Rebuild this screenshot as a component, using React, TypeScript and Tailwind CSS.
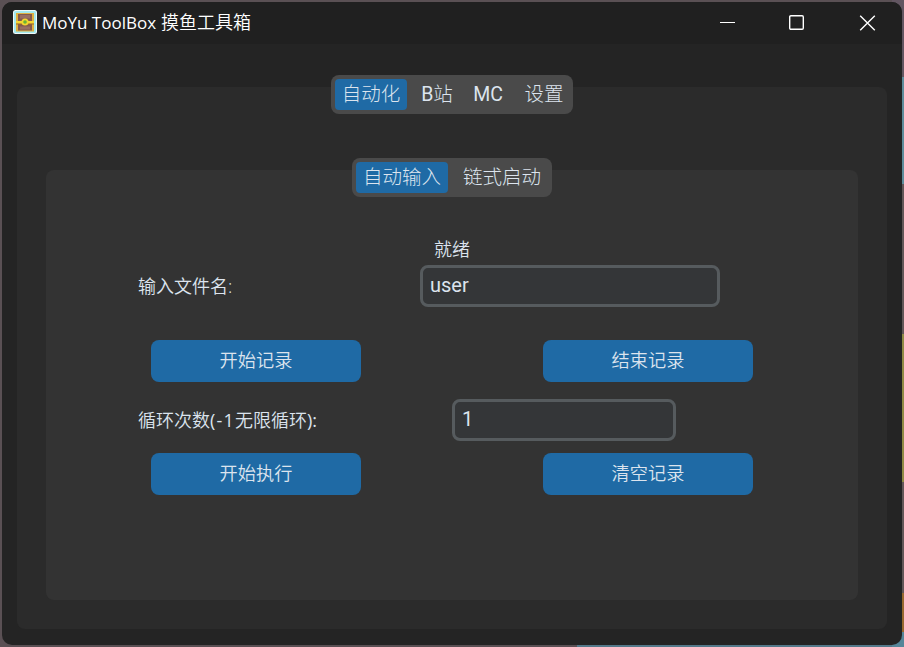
import React, { useState } from 'react';
import clsx from 'clsx';

interface SegmentedProps {
  items: string[];
  widths: string[];
  value: string;
  onChange: (value: string) => void;
}

/** Tab switcher that straddles the top edge of its panel */
const Segmented: React.FC<SegmentedProps> = ({ items, widths, value, onChange }) => (
  <div className="relative z-10 flex h-[39px] rounded-lg bg-[#4a4a4a] p-1">
    {items.map((item, i) => {
      // latin letters are set a step heavier than the chinese ones
      const latin = item.match(/^[A-Z]+/)?.[0] ?? '';
      return (
        <button
          key={item}
          onClick={() => onChange(item)}
          className={clsx(
            'h-[31px] whitespace-nowrap rounded text-center text-[19.5px] leading-[31px]',
            widths[i],
            value === item && 'bg-[#1f6aa5]',
          )}
        >
          {latin && <span className="font-normal">{latin}</span>}
          {item.slice(latin.length)}
        </button>
      );
    })}
  </div>
);

const ActionButton: React.FC<{ label: string }> = ({ label }) => (
  <button className="h-[42px] w-[210px] rounded-lg bg-[#1f6aa5] text-[18.2px] leading-10 pb-0.5 hover:bg-[#144870]">
    {label}
  </button>
);

interface EntryProps {
  value: string;
  onChange: (value: string) => void;
  className: string;
}

const Entry: React.FC<EntryProps> = ({ value, onChange, className }) => (
  <input
    value={value}
    onChange={(e) => onChange(e.target.value)}
    className={clsx(
      "h-[42px] rounded-lg border-3 border-[#565b5e] bg-[#343638] px-[7px] pb-0.5 font-['Roboto',sans-serif] text-xl font-normal outline-none",
      className,
    )}
  />
);

const ChestIcon = () => (
  <svg width="24" height="24" viewBox="0 0 24 24" className="ml-[11px]">
    <rect width="24" height="24" rx="2.5" fill="#eefafa" />
    <rect x="1" y="1" width="22" height="22" rx="1.5" fill="#a4e9ee" />
    <rect x="3" y="3" width="18" height="18.5" fill="#e0b040" />
    <rect x="5" y="4" width="14" height="7" fill="#82594f" />
    <rect x="7" y="5" width="10" height="3.5" fill="#986e62" />
    <rect x="5" y="14" width="14" height="6.5" fill="#82594f" />
    <rect x="7" y="16.5" width="10" height="3" fill="#986e62" />
    <rect x="3" y="11" width="18" height="2.5" fill="#f5d433" />
    <rect x="3" y="13.5" width="18" height="1" fill="#9a6b28" />
    <circle cx="12" cy="12" r="3.5" fill="#f2d52f" />
    <circle cx="12" cy="12" r="1.8" fill="#68b336" />
  </svg>
);

const TitleBar = () => (
  <header className="flex h-[42px] shrink-0 items-center justify-between bg-[#202020] pb-[3px]">
    <div className="flex items-center">
      <ChestIcon />
      <h1 className="ml-[5px] whitespace-pre pt-0.5 font-['Open_Sans','Noto_Sans_CJK_SC',sans-serif] text-lg font-[350] leading-6 text-white">
        <span className="inline-block w-[119px] text-[17px] font-normal">MoYu ToolBox</span>
        摸鱼工具箱
      </h1>
    </div>
    <div className="flex items-center gap-[54px] pr-[26px] pt-[3px] text-white">
      <svg width="15" height="16" viewBox="0 0 15 16" shapeRendering="crispEdges">
        <path d="M0 7.5H15" stroke="currentColor" />
      </svg>
      <svg width="15" height="16" viewBox="0 0 15 16" fill="none">
        <rect x="0.7" y="0.7" width="13.6" height="13.6" rx="1.2" stroke="currentColor" strokeWidth="1.4" />
      </svg>
      <svg width="18" height="16" viewBox="0 0 18 16" fill="none">
        <path d="M2.2 0.7L16.8 15.3M16.8 0.7L2.2 15.3" stroke="currentColor" strokeWidth="1.4" />
      </svg>
    </div>
  </header>
);

const AutoInputForm = () => {
  const [fileName, setFileName] = useState('user');
  const [loops, setLoops] = useState('1');

  return (
    <div className="flex flex-col font-['Open_Sans','Noto_Sans_CJK_SC',sans-serif] text-lg font-[350]">
      <div className="mt-[39px] pl-[388px] leading-[26px]">就绪</div>
      <div className="mt-[3px] flex items-center pl-[92px]">
        <label className="w-[282px]">输入文件名:</label>
        <Entry value={fileName} onChange={setFileName} className="w-[300px]" />
      </div>
      <div className="mt-[33px] flex gap-[182px] pl-[105px]">
        <ActionButton label="开始记录" />
        <ActionButton label="结束记录" />
      </div>
      <div className="mt-[17px] flex items-center pl-[92px]">
        <label className="w-[314px]">
          循环次数<span className="font-normal tracking-[1.2px]">(-1</span>无限循环<span className="font-normal">):</span>
        </label>
        <Entry value={loops} onChange={setLoops} className="w-56" />
      </div>
      <div className="mt-3 flex gap-[182px] pl-[105px]">
        <ActionButton label="开始执行" />
        <ActionButton label="清空记录" />
      </div>
    </div>
  );
};

export default function App() {
  const [tab, setTab] = useState('自动化');
  const [subTab, setSubTab] = useState('自动输入');

  return (
    <div className="flex h-[647px] w-[904px] bg-[#5a5054] font-['Roboto','Noto_Sans_CJK_SC',sans-serif] font-light text-[#dce4ee]">
      {/* desktop showing around the window */}
      <div className="flex h-full w-full bg-[linear-gradient(to_bottom,#625661_77px,#5e8d9c_77px,#5e8d9c_184px,#625758_184px,#625758_334px,#8f8b45_334px,#8f8b45_482px,#625758_482px,#625758_593px,#98692f_593px,#98692f_632px,#568699_632px)] bg-[length:12px_647px] bg-right bg-no-repeat">
        <div className="flex h-full w-full bg-[linear-gradient(to_right,transparent_577px,#54798a_577px,#54798a_892px,transparent_892px)] bg-[length:904px_2px] bg-bottom bg-no-repeat p-0.5">
          <div className="flex h-[643px] w-[900px] flex-col overflow-hidden rounded-[10px] bg-[#242424]">
            <TitleBar />
            <main className="mx-[15px] mt-[43px] flex h-[542px] flex-col rounded-lg bg-[#2b2b2b]">
              <div className="-mt-3 flex justify-center">
                <Segmented
                  items={['自动化', 'B站', 'MC', '设置']}
                  widths={['w-[72px]', 'w-[60px]', 'w-[42px]', 'w-[60px] pl-2.5']}
                  value={tab}
                  onChange={setTab}
                />
              </div>
              <section className="mx-[29px] mt-14 h-[430px] rounded-lg bg-[#333333]">
                <div className="-mt-3 flex justify-center">
                  <Segmented
                    items={['自动输入', '链式启动']}
                    widths={['w-[92px]', 'w-[100px] pl-2']}
                    value={subTab}
                    onChange={setSubTab}
                  />
                </div>
                <AutoInputForm />
              </section>
            </main>
          </div>
        </div>
      </div>
    </div>
  );
}
